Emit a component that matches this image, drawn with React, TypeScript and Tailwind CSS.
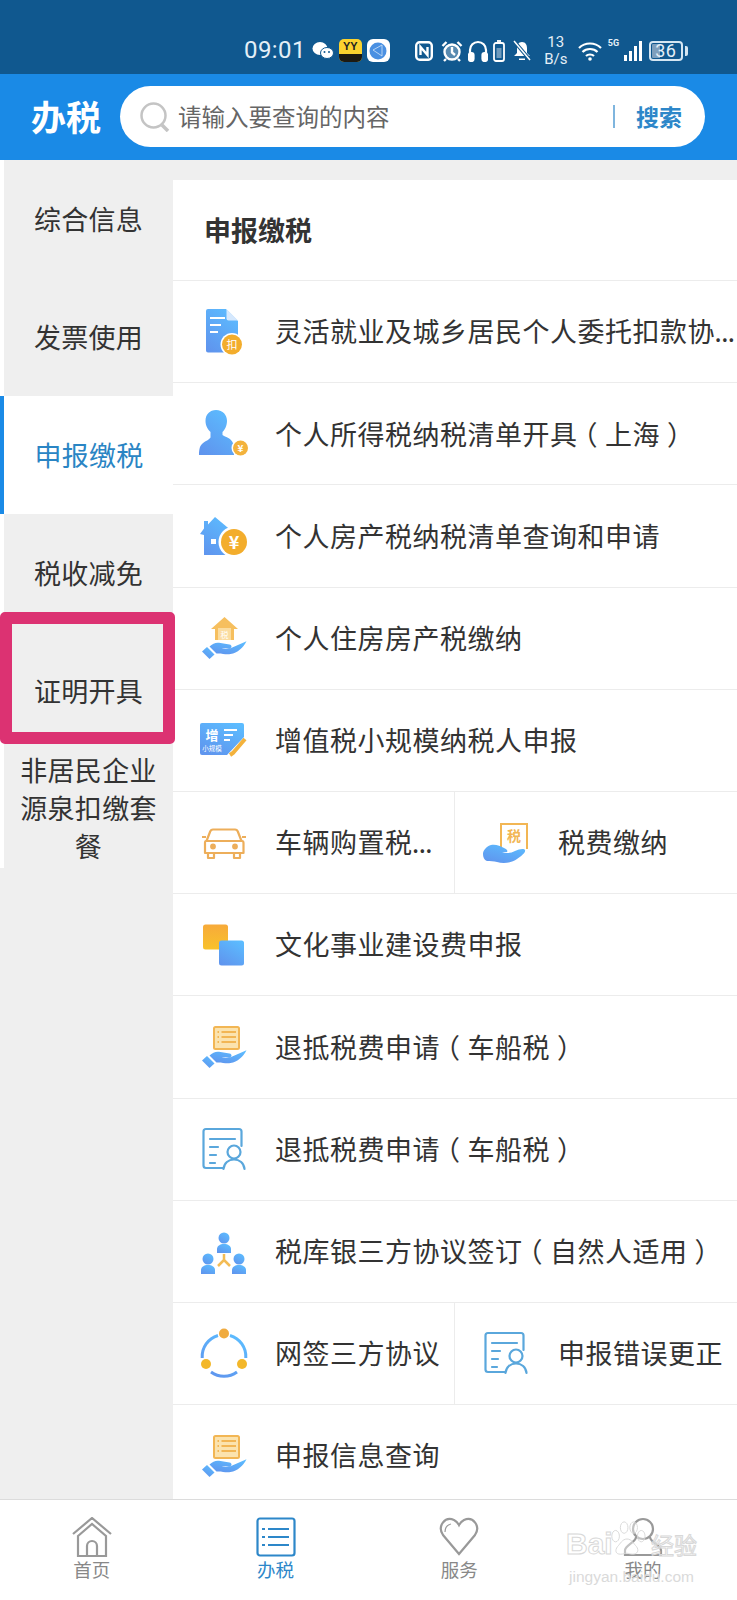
import type { ReactNode } from 'react';

const hand = (
    <>
        <path d="M9 43.500 14 39l7.500 7.500-5 4.500z" fill="url(#blue)" />
        <path d="M16.500 38.500c3.500-3.500 7-4.500 11-3.500l9 1.500c3 .7 2.600 4-.5 4l-7.500-.3c3 1 5.500 1 9 0l16-7c-3 6.500-9 11.500-16 12.800-5 .8-9-1-14-.5z" fill="url(#blue)" />
    </>
);

const listDoc = (
    <>
        <rect x="21" y="10" width="25" height="22" rx="1.500" fill="#fbe3ae" stroke="#f2b654" strokeWidth="2" />
        <path d="M24.500 15h1.500M24.500 20h1.500M24.500 25h1.500" stroke="#f2b654" strokeWidth="1.800" />
        <path d="M28.500 15H43M28.500 20H43M28.500 25H43" stroke="#f2b654" strokeWidth="2" />
    </>
);

const personDoc = (
    <g fill="none" stroke="#5aa7dc" strokeWidth="2.200" strokeLinecap="round" strokeLinejoin="round">
        <path d="M30 49H13a2.500 2.500 0 0 1-2.500-2.500V12.500A2.500 2.500 0 0 1 13 10h33a2.500 2.500 0 0 1 2.500 2.500V27" />
        <path d="M17 20h25M17 28h8M17 36h6M17 44h5" />
        <circle cx="41" cy="33" r="6.500" />
        <path d="M30.500 50c.5-6 5-9.500 10.500-9.500S51 44 51.500 50" />
    </g>
);

function person(cx: number, cy: number) {
    return (
        <g fill="url(#blue)">
            <circle cx={cx} cy={cy} r="5.500" />
            <path d={`M${cx - 7} ${cy + 15}v-4c0-3 3-5 7-5s7 2 7 5v4z`} />
        </g>
    );
}

const rowIcons: Record<string, ReactNode> = {
    deduct: (
        <>
            <path d="M15 7h18l12 12v29a2.500 2.500 0 0 1-2.500 2.500H15a2 2 0 0 1-2-2V9a2 2 0 0 1 2-2z" fill="url(#blue)" />
            <path d="M33.500 7v9.500a2 2 0 0 0 2 2H45z" fill="#d5e8fd" />
            <path d="M17 16h15M17 23h11M17 30h8" stroke="#fff" strokeWidth="2" />
            <circle cx="39" cy="42.500" r="11.500" fill="#fff" />
            <circle cx="39" cy="42.500" r="10" fill="#f3ad2c" />
            <text x="39" y="47" textAnchor="middle" fontSize="11" fill="#fff">扣</text>
        </>
    ),
    person: (
        <>
            <path d="M23 6c7 0 11 5 11 11 0 5-2.500 9-4.500 11v3c3 2 8 3 10 7 1.500 3 1.500 8 1.500 13H6c0-4 .5-9 3-11 4-3.500 7-4 8.500-6.500V28c-2.500-2.500-5-6-5-11 0-7 4.500-11 10.500-11z" fill="url(#blue)" />
            <circle cx="47.500" cy="44" r="9" fill="#fff" />
            <circle cx="47.500" cy="44" r="7.500" fill="#f3b23c" />
            <text x="47.500" y="48" textAnchor="middle" fontSize="10" fontWeight="700" fill="#fff">¥</text>
        </>
    ),
    house: (
        <>
            <path d="M22 11 40 26v23H11V29l-4-1 4-5.500V15h4v3.500z" fill="url(#blue)" />
            <rect x="18" y="33" width="5" height="5" fill="#fff" />
            <circle cx="41" cy="36" r="15.500" fill="#fff" />
            <circle cx="41" cy="36" r="13" fill="#f3ad2c" />
            <text x="41" y="42.500" textAnchor="middle" fontSize="18" fontWeight="700" fill="#fff">¥</text>
        </>
    ),
    handHouse: (
        <>
            <path d="M31.500 9 45 21h-4v11H22V21h-4z" fill="#f6bf5e" />
            <rect x="25" y="20" width="13" height="12" fill="#fbdc9f" />
            <text x="31.500" y="29.500" textAnchor="middle" fontSize="8" fill="#fff">税</text>
            {hand}
        </>
    ),
    card: (
        <>
            <path d="M9 13h40a2 2 0 0 1 2 2v12L34 45H9a2 2 0 0 1-2-2V15a2 2 0 0 1 2-2z" fill="url(#blue)" />
            <text x="19" y="30" textAnchor="middle" fontSize="13" fontWeight="700" fill="#fff">增</text>
            <text x="19" y="41" textAnchor="middle" fontSize="6.500" fill="#fff">小规模</text>
            <path d="M31 20h13M31 25h9M31 30h6" stroke="#fff" strokeWidth="2" />
            <path d="M52 29 40 43l-3 2" stroke="#f3b23c" strokeWidth="4" fill="none" />
        </>
    ),
    car: (
        <g fill="none" stroke="#edae5a" strokeWidth="2.200" strokeLinejoin="round">
            <path d="M13 28h36c1 0 1.500 1 1.500 2v10H12V30c0-1 0-2 1-2z" />
            <path d="m13.500 28 3.500-9c.5-1.500 1.500-2.500 3-2.500h22c1.500 0 2.500 1 3 2.500l3.500 9" />
            <path d="M15 40v5h6v-5M41 40v5h6v-5" />
            <circle cx="20" cy="33.500" r="1.800" fill="#edae5a" />
            <circle cx="42" cy="33.500" r="1.800" fill="#edae5a" />
            <path d="M9 24h4M49 24h4" />
        </g>
    ),
    taxHand: (
        <>
            <path d="M26 34V11h26v25" fill="#fff" stroke="#f2b654" strokeWidth="2" />
            <text x="39" y="28" textAnchor="middle" fontSize="14" fontWeight="700" fill="#f2b654">税</text>
            <path d="M8 41c0-4 4-8 8-9 5-1 9 1 13 3 3 1.500 4 2.500 3 4l-5 0c5 2 9 1 13-1 4-2 9-3 10-1 1 3-4 6-8 9-5 4-14 5-20 3-3-1-7-1-10-1-3-1-4-4-4-7z" fill="url(#blue)" />
        </>
    ),
    squares: (
        <>
            <rect x="10" y="9.500" width="25" height="25" rx="2.500" fill="url(#orange)" />
            <rect x="26" y="25.500" width="25" height="25" rx="2.500" fill="url(#blue)" />
        </>
    ),
    handList: (
        <>
            {listDoc}
            {hand}
        </>
    ),
    personDoc,
    trio: (
        <>
            {person(31, 17)}
            {person(15, 38)}
            {person(46, 38)}
            <path d="M31 33v6M31 39l-6 6M31 39l6 6" stroke="#f3bc55" strokeWidth="2.500" fill="none" />
        </>
    ),
    ring: (
        <>
            <path d="M37 12.500A22 22 0 0 1 52.800 35M44 49a22 22 0 0 1-26 0M9.200 35A22 22 0 0 1 25 12.500" fill="none" stroke="url(#blue)" strokeWidth="3" />
            <circle cx="31" cy="10.500" r="5" fill="#f0ab3f" />
            <circle cx="13" cy="41" r="5" fill="#f3b72a" />
            <circle cx="49" cy="41" r="5" fill="#f3b72a" />
        </>
    ),
};

function RowIcon({ name }: { name: string }) {
    return (
        <svg viewBox="0 0 60 60" className="w-[60px] h-[60px] shrink-0">
            <defs>
                <linearGradient id="blue" x1="0.800" y1="0" x2="0.200" y2="1">
                    <stop offset="0" stopColor="#5cbcff" />
                    <stop offset="1" stopColor="#5f95ee" />
                </linearGradient>
                <linearGradient id="orange" x1="0" y1="0" x2="0" y2="1">
                    <stop offset="0" stopColor="#f7aa3a" />
                    <stop offset="1" stopColor="#f8c22b" />
                </linearGradient>
            </defs>
            {rowIcons[name]}
        </svg>
    );
}

const sideItems = ['综合信息', '发票使用', '申报缴税', '税收减免', '证明开具'];

type Cell = { icon: string; label: string };
const rows: Cell[][] = [
    [{ icon: 'deduct', label: '灵活就业及城乡居民个人委托扣款协...' }],
    [{ icon: 'person', label: '个人所得税纳税清单开具（上海）' }],
    [{ icon: 'house', label: '个人房产税纳税清单查询和申请' }],
    [{ icon: 'handHouse', label: '个人住房房产税缴纳' }],
    [{ icon: 'card', label: '增值税小规模纳税人申报' }],
    [{ icon: 'car', label: '车辆购置税...' }, { icon: 'taxHand', label: '税费缴纳' }],
    [{ icon: 'squares', label: '文化事业建设费申报' }],
    [{ icon: 'handList', label: '退抵税费申请（车船税）' }],
    [{ icon: 'personDoc', label: '退抵税费申请（车船税）' }],
    [{ icon: 'trio', label: '税库银三方协议签订（自然人适用）' }],
    [{ icon: 'ring', label: '网签三方协议' }, { icon: 'personDoc', label: '申报错误更正' }],
    [{ icon: 'handList', label: '申报信息查询' }],
];

// the phone font centres full-width brackets and has small ascii dots
function RowLabel({ text }: { text: string }) {
    const parts = text.split(/([（）]|\.\.\.)/).filter(Boolean);
    return (
        <>
            {parts.map((part, i) => {
                if (part === '（') return <span key={i} className="relative -left-[7px]">{part}</span>;
                if (part === '）') return <span key={i} className="relative left-[7px]">{part}</span>;
                if (part === '...') return <span key={i} className="text-[19px] font-bold">{part}</span>;
                return <span key={i}>{part}</span>;
            })}
        </>
    );
}

function StatusBar() {
    return (
        <div className="h-[74px] bg-[#10588f] pl-[244px] pt-[33px] flex items-start text-[#e4eff7]">
            <span className="font-['Roboto',sans-serif] text-[24px] leading-[34px] tracking-[0.4px]">09:01</span>
            {/* wechat */}
            <svg viewBox="0 0 22 20" className="w-[22px] h-[20px] ml-[6px] mt-[8px]" fill="#fff">
                <ellipse cx="8" cy="7.500" rx="7.500" ry="6.500" />
                <ellipse cx="15" cy="12" rx="6.500" ry="5.500" stroke="#10588f" strokeWidth="1" />
                <circle cx="12.500" cy="11" r="1" fill="#10588f" />
                <circle cx="17" cy="11" r="1" fill="#10588f" />
            </svg>
            {/* yy */}
            <div className="w-[23px] h-[23px] ml-[5px] mt-[6px] rounded-[5px] bg-[#fbd22e] overflow-hidden flex flex-col items-center">
                <span className="font-['Liberation_Sans',sans-serif] text-[11px] font-bold leading-[15px] text-[#222]">YY</span>
                <div className="w-full h-[8px] bg-[#1d1a12]" />
            </div>
            {/* browser */}
            <div className="w-[23px] h-[23px] ml-[5px] mt-[6px] rounded-[6px] bg-white flex items-center justify-center">
                <svg viewBox="0 0 18 18" className="w-[18px] h-[18px]">
                    <circle cx="9" cy="9" r="8.500" fill="#4a90e2" />
                    <path d="M4 8 13 3M4 8l9 6M13 3v11" stroke="#cfe3f8" strokeWidth="0.800" fill="none" />
                </svg>
            </div>
            {/* nfc */}
            <svg viewBox="0 0 18 20" className="w-[18px] h-[20px] ml-[25px] mt-[8px]" fill="none" stroke="#fff" strokeWidth="2.400">
                <rect x="1.200" y="1.200" width="15.600" height="17.600" rx="3.500" />
                <path d="M5.500 14V6l7 8V6" />
            </svg>
            {/* alarm */}
            <svg viewBox="0 0 22 22" className="w-[22px] h-[22px] ml-[8px] mt-[7px]" fill="none" stroke="#fff" strokeWidth="2.400">
                <circle cx="11" cy="12" r="7.500" fill="#fff" fillOpacity="0.300" />
                <path d="M11 7v5.500l3 2.500M1.500 6 5.500 2M20.500 6 16.500 2M5 19l-2 2M17 19l2 2" />
            </svg>
            {/* headphones */}
            <svg viewBox="0 0 20 22" className="w-[20px] h-[22px] ml-[5px] mt-[7px]" fill="none" stroke="#fff" strokeWidth="2.200">
                <path d="M2 15v-5a8 8 0 0 1 16 0v5" />
                <rect x="1" y="13" width="4.500" height="8" rx="2" fill="#fff" />
                <rect x="14.500" y="13" width="4.500" height="8" rx="2" fill="#fff" />
            </svg>
            {/* battery saver */}
            <svg viewBox="0 0 12 22" className="w-[12px] h-[22px] ml-[5px] mt-[7px]" fill="none" stroke="#fff" strokeWidth="1.800">
                <rect x="1" y="3" width="10" height="18" rx="2" />
                <path d="M4 1h4" />
                <rect x="3.500" y="8" width="5" height="10" fill="#fff" fillOpacity="0.400" stroke="none" />
            </svg>
            {/* muted bell */}
            <svg viewBox="0 0 20 22" className="w-[20px] h-[22px] ml-[7px] mt-[7px]" fill="#fff">
                <path d="M10 2c3.500 0 5 3 5 6v5l3 3H2l3-3V8c0-3 1.500-6 5-6z" />
                <path d="M7 18.500h6v1.500H7z" />
                <path d="M2 1l16 19" stroke="#10588f" strokeWidth="3.500" />
                <path d="M2 1l16 19" stroke="#fff" strokeWidth="1.500" />
            </svg>
            <div className="ml-[11px] mt-[1px] w-[26px] flex flex-col items-center font-['Roboto',sans-serif] text-[15px] leading-[16px]">
                <span>13</span>
                <span className="mt-[1px]">B/s</span>
            </div>
            {/* wifi */}
            <svg viewBox="0 0 24 20" className="w-[24px] h-[20px] ml-[9px] mt-[8px]" fill="none" stroke="#fff" strokeWidth="2.200">
                <path d="M1 7c6-6 16-6 22 0M4.500 11c4-4 11-4 15 0M8 15c2-2 6-2 8 0" />
                <circle cx="12" cy="18" r="1.800" fill="#fff" stroke="none" />
            </svg>
            <div className="relative w-[34px] h-[24px] ml-[6px] mt-[5px]">
                <span className="absolute left-0 top-0 font-['Roboto',sans-serif] text-[9px] font-bold leading-[10px]">5G</span>
                <div className="absolute right-0 bottom-[1px] flex items-end gap-[2px]">
                    <div className="w-[3px] h-[6px] bg-white" />
                    <div className="w-[3px] h-[10px] bg-white" />
                    <div className="w-[3px] h-[15px] bg-white" />
                    <div className="w-[3px] h-[20px] bg-white" />
                </div>
            </div>
            <div className="ml-[7px] mt-[8px] w-[34px] h-[20px] rounded-[4px] border-[2px] border-[#d5e6f2] relative flex items-center justify-center font-['Roboto',sans-serif] text-[18px] leading-none">
                <div className="absolute left-[1px] top-[1px] bottom-[1px] w-[8px] bg-[#7f9fbc] rounded-l-[1px]" />
                <span className="relative tracking-[0.5px]">36</span>
            </div>
            <div className="w-[3px] h-[10px] ml-[2px] mt-[13px] rounded-r-[2px] bg-[#d5e6f2]" />
        </div>
    );
}

function Header() {
    return (
        <div className="h-[86px] bg-[#1a8ae6] flex items-start pl-[31px] pt-[12px]">
            <span className="w-[89px] text-[35px] font-bold leading-[60px] text-white">办税</span>
            <div className="w-[585px] h-[61px] rounded-full bg-white flex items-center pl-[20px]">
                <svg viewBox="0 0 30 30" className="w-[30px] h-[30px] shrink-0" fill="none" stroke="#c4c4c4" strokeWidth="2.500">
                    <circle cx="13.500" cy="13.500" r="12" />
                    <path d="m22 23 6 6" strokeWidth="3.500" />
                </svg>
                <span className="ml-[8px] text-[23.500px] text-[#666] leading-none">请输入要查询的内容</span>
                <div className="ml-auto w-[2px] h-[23px] bg-[#7fb5de]" />
                <span className="ml-[21px] mr-[23px] text-[23px] font-bold text-[#2d87c9] leading-none">搜索</span>
            </div>
        </div>
    );
}

function Sidebar() {
    return (
        <div className="w-[173px] shrink-0 text-[#333] text-[27px] tracking-[0.300px]">
            <div className="bg-white pl-[4px]">
                {sideItems.map((label) => {
                    const active = label === '申报缴税';
                    return (
                        <div
                            key={label}
                            className={
                                active
                                    ? 'h-[118px] -ml-[4px] bg-white border-l-[4px] border-[#1a8ae6] pl-[4px] pr-[3px] text-[#2a85c4] flex items-center justify-center'
                                    : 'h-[118px] bg-[#efefef] flex items-center justify-center'
                            }
                        >
                            {label}
                        </div>
                    );
                })}
                <div className="h-[118px] bg-[#efefef] px-[13px] pt-[1px] text-center leading-[38px]">非居民企业源泉扣缴套餐</div>
            </div>
        </div>
    );
}

function ContentRow({ cells }: { cells: Cell[] }) {
    return (
        <div className="h-[102.200px] border-t-[1.500px] border-[#ececec] flex">
            {cells.map((cell, i) => (
                <div
                    key={cell.label + i}
                    className={
                        cells.length === 1
                            ? 'flex-1 min-w-0 flex items-center pl-[20px]'
                            : i === 0
                              ? 'w-[282px] shrink-0 flex items-center pl-[20px] border-r-[1.500px] border-[#ececec]'
                              : 'flex-1 min-w-0 flex items-center pl-[20px]'
                    }
                >
                    <RowIcon name={cell.icon} />
                    <span
                        className={
                            i === 0
                                ? 'ml-[22px] text-[27px] tracking-[0.500px] text-[#333] whitespace-nowrap'
                                : 'ml-[23px] text-[27px] tracking-[0.500px] text-[#333] whitespace-nowrap'
                        }
                    >
                        <RowLabel text={cell.label} />
                    </span>
                </div>
            ))}
        </div>
    );
}

function TabBar() {
    const tabs: { label: string; active?: boolean; icon: ReactNode }[] = [
        {
            label: '首页',
            icon: (
                <svg viewBox="0 0 40 40" className="w-[40px] h-[40px]" fill="none" stroke="#999" strokeWidth="2.200">
                    <path d="M1 17 20 1l19 16M6 19 20 7l14 12v20H6z" />
                    <path d="M15 39V29a5 5 0 0 1 10 0v10" />
                </svg>
            ),
        },
        {
            label: '办税',
            active: true,
            icon: (
                <svg viewBox="0 0 40 40" className="w-[40px] h-[40px]" fill="none" stroke="#2d87c9" strokeWidth="2.200">
                    <rect x="1.500" y="1.500" width="37" height="37" rx="2.500" />
                    <path d="M12 12h21M12 20h21M12 28h21" />
                    <path d="M6 12h3M6 20h3M6 28h3" />
                </svg>
            ),
        },
        {
            label: '服务',
            icon: (
                <svg viewBox="0 0 42 40" className="w-[42px] h-[40px]" fill="none" stroke="#999" strokeWidth="2.200">
                    <path d="M21 37 5 18C-1 9 7-1 16 3c2 1 4 3 5 5 1-2 3-4 5-5 9-4 17 6 11 15z" />
                    <path d="M7 15c0-4 2-7 6-8" strokeWidth="1.200" />
                </svg>
            ),
        },
        {
            label: '我的',
            icon: (
                <svg viewBox="0 0 40 40" className="w-[40px] h-[40px]" fill="none" stroke="#999" strokeWidth="2.200">
                    <circle cx="20" cy="12" r="10" />
                    <path d="M13 20c0 5-10 8-11 13v5h36v-5c-1-5-11-8-11-13" />
                </svg>
            ),
        },
    ];
    return (
        <div className="h-[101px] border-t-[1.500px] border-[#dcdcdc] bg-white">
            <div className="w-[735px] grid grid-cols-4">
                {tabs.map((tab) => (
                    <div key={tab.label} className="flex flex-col items-center pt-[17px]">
                        {tab.icon}
                        <span className={tab.active ? 'text-[18.500px] leading-[24px] text-[#2d87c9]' : 'text-[18.500px] leading-[24px] text-[#888]'}>
                            {tab.label}
                        </span>
                    </div>
                ))}
            </div>
        </div>
    );
}

export default function App() {
    return (
        <div className="relative w-[737px] h-[1600px] overflow-hidden bg-[#efefef] font-['Noto_Sans_CJK_SC','Noto_Sans',sans-serif]">
            <StatusBar />
            <Header />
            <div className="h-[1339px] flex bg-[#efefef]">
                <Sidebar />
                <div className="flex-1 min-w-0 mt-[20px] bg-white">
                    <div className="h-[100px] pl-[31px] flex items-center text-[27px] font-bold text-[#333]">申报缴税</div>
                    {rows.map((cells, i) => (
                        <ContentRow key={i} cells={cells} />
                    ))}
                </div>
            </div>
            <TabBar />

            {/* annotation drawn on top of the screenshot */}
            <div className="absolute left-0 top-[612px] w-[175px] h-[132px] border-[12px] border-[#dc3272] rounded-[5px]" />

            {/* baidu watermark */}
            <div className="absolute left-[566px] top-[1520px] w-[131px] text-center pointer-events-none">
                <div className="relative h-[40px] flex items-end justify-between font-['Liberation_Sans',sans-serif] text-[30px] font-bold leading-[32px] text-white/40 [-webkit-text-stroke:1px_#d8d8d8]">
                    <span>Bai</span>
                    <svg viewBox="0 0 40 40" className="absolute left-[42px] top-0 w-[38px] h-[38px]" fill="#ffffff" fillOpacity="0.400" stroke="#d8d8d8" strokeWidth="1">
                        <ellipse cx="8" cy="17" rx="4" ry="6" />
                        <ellipse cx="17" cy="8" rx="4" ry="6" />
                        <ellipse cx="27" cy="8" rx="4" ry="6" />
                        <ellipse cx="35" cy="17" rx="4" ry="6" />
                        <path d="M20 20c5 0 7 5 10 8 3 4 1 8-4 8-3 0-4-1-6-1s-4 1-7 1c-5 0-6-4-3-8 3-3 5-8 10-8z" />
                    </svg>
                    <span className="font-['Noto_Sans_CJK_SC',sans-serif] font-normal text-[23px]">经验</span>
                </div>
                <div className="font-['Liberation_Sans',sans-serif] text-[15.500px] leading-[18px] mt-[8px] text-[#dadada]">jingyan.baidu.com</div>
            </div>
        </div>
    );
}
